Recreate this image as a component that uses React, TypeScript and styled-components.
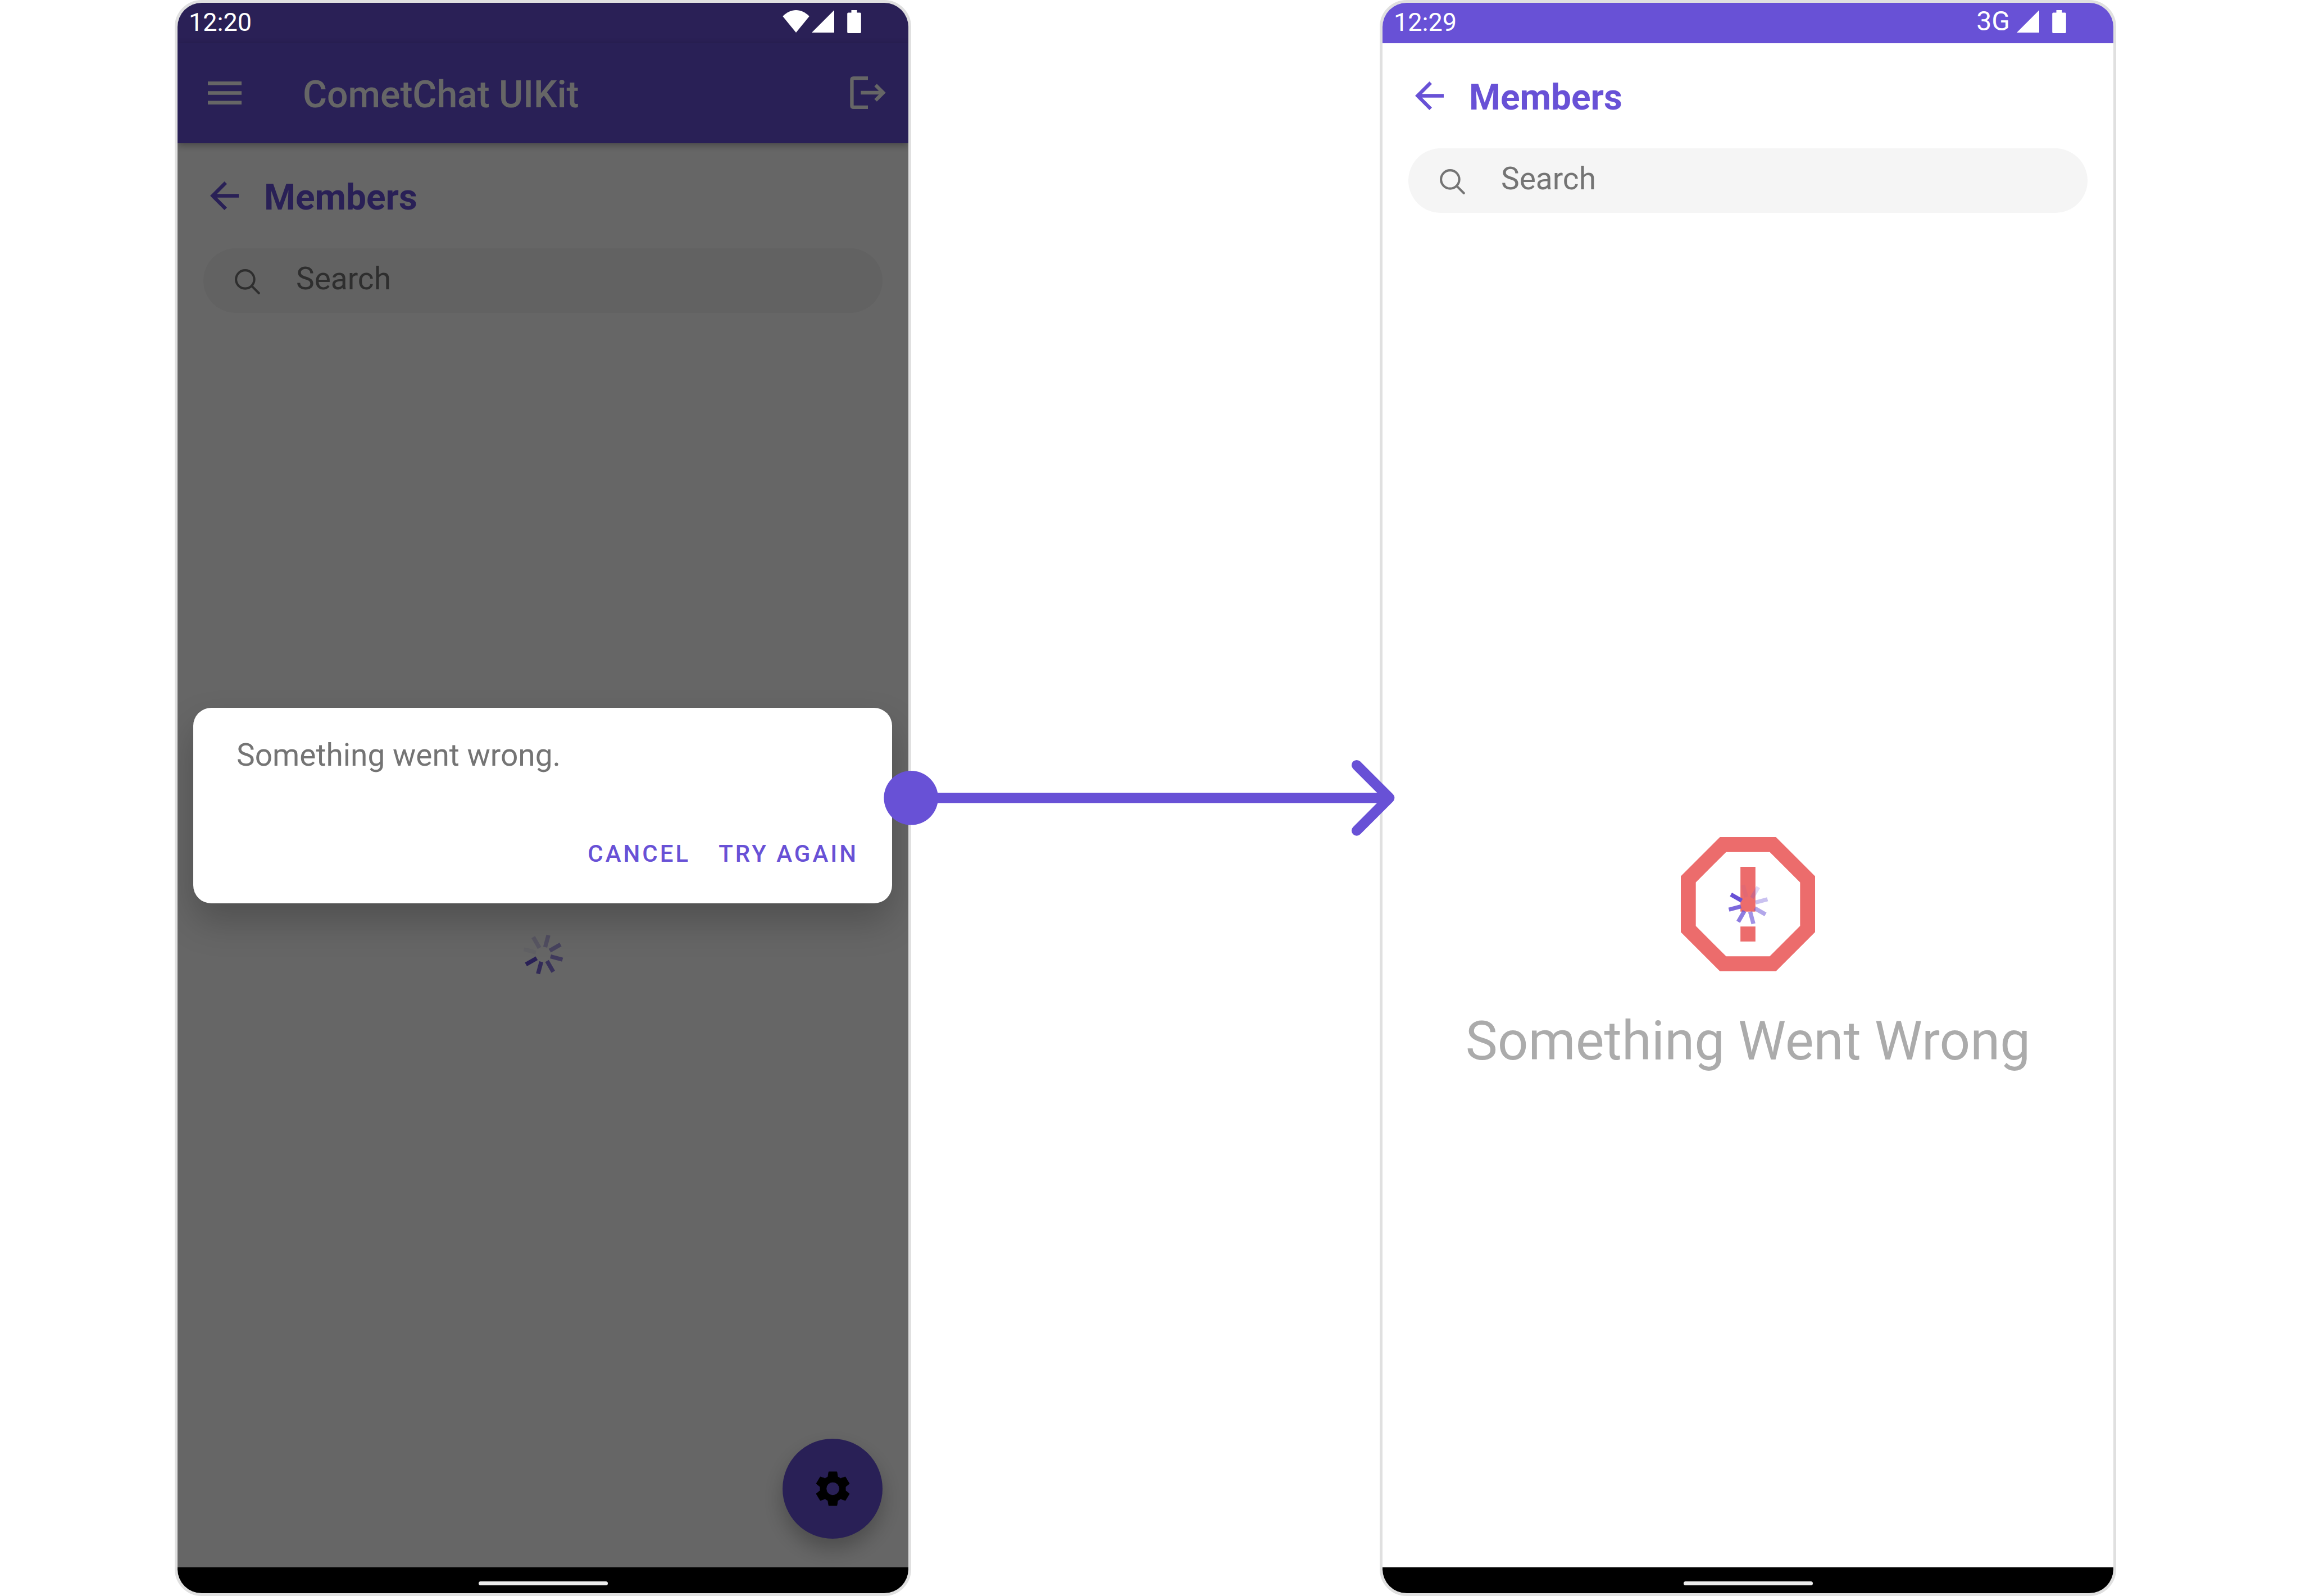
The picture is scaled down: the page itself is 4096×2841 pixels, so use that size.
import React from "react";
import styled, { createGlobalStyle } from "styled-components";

const color = {
  primary: "#6851d6",
  primaryDim: "#2a2056",
  frame: "#e0e0e0",
  muted: "#747474",
  faint: "#ababab",
  field: "#f5f5f5",
  error: "#ec6c6c",
};

const GlobalStyle = createGlobalStyle`
  *, *::before, *::after { box-sizing: border-box; }
  body { margin: 0; background: #fff; font-family: Roboto, "Liberation Sans", sans-serif; }
  button, input { font: inherit; color: inherit; }
  svg { display: block; flex: none; }
`;

const Page = styled.main`
  display: grid;
  grid-template-columns: 311fr 1311fr 834fr 1311fr 329fr;
  min-height: 100vh;
`;

const Phone = styled.section<{ $column: number }>`
  grid-column: ${(p) => p.$column};
  grid-row: 1;
  display: flex;
  flex-direction: column;
  overflow: hidden;
  border: 5px solid ${color.frame};
  border-radius: 48px;
  background: #fff;
`;

const StatusBar = styled.div<{ $dimmed?: boolean }>`
  display: flex;
  align-items: center;
  justify-content: space-between;
  height: 72px;
  padding: 0 84px 6px 20px;
  background: ${(p) => (p.$dimmed ? color.primaryDim : color.primary)};
  color: #fff;
  font-size: 45px;
  line-height: 56px;
`;

const Clock = styled.span`
  padding-top: 4px;
`;

const StatusIcons = styled.div`
  display: flex;
  align-items: center;
`;

const Network = styled.span`
  margin-right: 12px;
  font-size: 48px;
`;

const Battery = styled.svg`
  margin-left: 23px;
`;

const Wifi = styled.svg`
  margin-right: 4px;
`;

const Screen = styled.div`
  position: relative;
  flex: 1;
  display: flex;
  flex-direction: column;
`;

const AppBar = styled.header`
  display: flex;
  align-items: center;
  height: 178px;
  padding: 0 40px 2px 54px;
  background: ${color.primary};
  color: #fff;
  box-shadow: 0 4px 12px rgba(0, 0, 0, 0.3);
`;

const IconButton = styled.button`
  display: flex;
  padding: 0;
  border: 0;
  background: none;
  cursor: pointer;
`;

const AppTitle = styled.h1`
  flex: 1;
  margin: 0 0 0 109px;
  padding-top: 8px;
  font-size: 66px;
  font-weight: 500;
  line-height: 80px;
`;

const ListHeader = styled.div`
  display: flex;
  align-items: center;
  gap: 45px;
  height: 187px;
  padding-left: 58px;
  color: ${color.primary};
`;

const ListTitle = styled.h2`
  margin: 0;
  padding-top: 6px;
  font-size: 64px;
  font-weight: 700;
  line-height: 80px;
`;

const SearchBox = styled.label`
  display: flex;
  align-items: center;
  gap: 64px;
  height: 115px;
  margin: 0 46px 50px;
  padding: 0 56px;
  border-radius: 58px;
  background: ${color.field};
  color: ${color.muted};
`;

const SearchGlyph = styled.svg`
  margin-top: 4px;
`;

const SearchInput = styled.input`
  flex: 1;
  min-width: 0;
  height: 72px;
  margin-bottom: 8px;
  padding: 0;
  border: 0;
  outline: 0;
  background: none;
  font-size: 55px;
  line-height: 72px;
  &::placeholder { color: ${color.muted}; opacity: 1; }
`;

const Content = styled.div`
  flex: 1;
  display: grid;
  grid-template-rows: 1fr auto 1fr;
  justify-items: center;
`;

const Centered = styled.div`
  grid-area: 2 / 1;
  align-self: center;
`;

const ErrorText = styled.p`
  grid-area: 3 / 1;
  margin: 68px 0 0;
  color: ${color.faint};
  font-size: 96px;
  line-height: 112px;
`;

const Fab = styled.button`
  position: absolute;
  right: 46px;
  bottom: 51px;
  display: grid;
  place-items: center;
  width: 178px;
  height: 178px;
  padding: 0;
  border: 0;
  border-radius: 50%;
  background: ${color.primary};
  color: #000;
  box-shadow: 0 18px 36px rgba(0, 0, 0, 0.26);
`;

const Scrim = styled.div`
  position: absolute;
  inset: 0;
  display: flex;
  align-items: center;
  padding: 0 29px 0 28px;
  background: rgba(0, 0, 0, 0.6);
`;

const Dialog = styled.div`
  flex: 1;
  display: flex;
  flex-direction: column;
  justify-content: space-between;
  height: 348px;
  padding: 48px 60px 60px 77px;
  border-radius: 32px;
  background: #fff;
  box-shadow: 0 32px 64px rgba(0, 0, 0, 0.22);
`;

const DialogText = styled.p`
  margin: 0;
  color: ${color.muted};
  font-size: 55px;
  line-height: 72px;
`;

const DialogActions = styled.div`
  display: flex;
  justify-content: flex-end;
  gap: 50px;
`;

const TextButton = styled.button`
  padding: 0;
  border: 0;
  background: none;
  color: ${color.primary};
  font-size: 42px;
  font-weight: 500;
  line-height: 56px;
  letter-spacing: 4px;
  text-transform: uppercase;
  cursor: pointer;
`;

const NavBar = styled.div`
  display: flex;
  justify-content: center;
  height: 46px;
  padding-top: 25px;
  background: #000;
`;

const HomeIndicator = styled.div`
  width: 230px;
  height: 7px;
  border-radius: 4px;
  background: #ebebeb;
`;

const Connector = styled.div`
  grid-column: 3;
  grid-row: 1;
  position: relative;
  z-index: 1;
  display: flex;
  align-items: center;
  margin: 0 -31px 0 -55px;
`;

function SignalIcon() {
  return (
    <svg width="40" height="40" viewBox="0 0 44 44" aria-hidden="true">
      <path d="M44 0V44H0z" fill="#fff" />
    </svg>
  );
}

function BatteryIcon() {
  return (
    <Battery width="25" height="41" viewBox="0 0 27 45" aria-hidden="true">
      <path d="M8 0H19V5H25Q27 5 27 7V43Q27 45 25 45H2Q0 45 0 43V7Q0 5 2 5H8z" fill="#fff" />
    </Battery>
  );
}

function WifiIcon() {
  return (
    <Wifi width="48" height="40" viewBox="0 0 52 44" aria-hidden="true">
      <path d="M0 12C8 4 17 0 26 0S44 4 52 12L26 44z" fill="#fff" />
    </Wifi>
  );
}

function MenuIcon() {
  return (
    <svg width="60" height="41" viewBox="0 0 66 45" aria-hidden="true">
      <path d="M0 3.5H66M0 22.5H66M0 41.5H66" stroke="currentColor" strokeWidth="7" />
    </svg>
  );
}

function LogoutIcon() {
  return (
    <svg width="64" height="58" viewBox="0 0 70 64" fill="none" stroke="currentColor" strokeWidth="7" aria-hidden="true">
      <path d="M35 3.5H7Q3.5 3.5 3.5 7V57Q3.5 60.5 7 60.5H35" />
      <path d="M21 32H64M50 17L65 32L50 47" />
    </svg>
  );
}

function BackIcon() {
  return (
    <svg width="51" height="51" viewBox="0 0 56 56" fill="none" stroke="currentColor" strokeWidth="7" aria-hidden="true">
      <path d="M56 28H7M30.500 2.500L5 28L30.500 53.500" />
    </svg>
  );
}

function SearchIcon() {
  return (
    <SearchGlyph width="45" height="45" viewBox="0 0 49 49" fill="none" stroke="currentColor" strokeWidth="4.500" aria-hidden="true">
      <circle cx="20" cy="20" r="17.700" />
      <path d="M32.500 32.500L46.500 46.500" strokeLinecap="round" />
    </SearchGlyph>
  );
}

function GearIcon() {
  return (
    <svg width="61" height="62" viewBox="341 347 200 206" aria-hidden="true">
      <path
        fill="currentColor"
        stroke="currentColor"
        strokeWidth="3"
        strokeLinejoin="round"
        fillRule="evenodd"
        d="M417 350H465L470 380L487 389L515 380L539 420L516 439V461L539 480L515 520L487 510L470 521L465 550H417L412 521L395 510L367 520L343 480L366 461V439L343 420L367 380L395 389L412 380zM441 411A39 39 0 1 0 441 489A39 39 0 1 0 441 411z"
      />
    </svg>
  );
}

function ErrorIcon() {
  return (
    <svg width="239" height="239" viewBox="137 107 788 788" aria-hidden="true">
      <path
        fill={color.error}
        fillRule="evenodd"
        d="M367 107H695L925 337V665L695 895H367L137 665V337zM403 195L225 373V629L403 807H659L837 629V373L659 195z"
      />
      <path fill={color.error} d="M487 282H575V545H487zM487 632H575V720H487z" />
    </svg>
  );
}

function Spinner({ start }: { start: number }) {
  const strokes = [1, 0.85, 0.75, 0.62, 0.5, 0.35, 0.22, 0.07];
  return (
    <svg width="74" height="74" viewBox="-40 -40 80 80" role="img" aria-label="Loading">
      {strokes.map((opacity, i) => (
        <path
          key={opacity}
          d="M14.500 0H38.500"
          stroke={color.primary}
          strokeWidth="8"
          opacity={opacity}
          transform={`rotate(${start - i * 45})`}
        />
      ))}
    </svg>
  );
}

function MembersList() {
  return (
    <>
      <ListHeader>
        <IconButton aria-label="Back">
          <BackIcon />
        </IconButton>
        <ListTitle>Members</ListTitle>
      </ListHeader>
      <SearchBox>
        <SearchIcon />
        <SearchInput type="text" placeholder="Search" aria-label="Search" />
      </SearchBox>
    </>
  );
}

function Navigation() {
  return (
    <NavBar>
      <HomeIndicator />
    </NavBar>
  );
}

export default function App() {
  return (
    <>
      <GlobalStyle />
      <Page>
        <Phone $column={2}>
          <StatusBar $dimmed>
            <Clock>12:20</Clock>
            <StatusIcons>
              <WifiIcon />
              <SignalIcon />
              <BatteryIcon />
            </StatusIcons>
          </StatusBar>
          <Screen>
            <AppBar>
              <IconButton aria-label="Menu">
                <MenuIcon />
              </IconButton>
              <AppTitle>CometChat UIKit</AppTitle>
              <IconButton aria-label="Log out">
                <LogoutIcon />
              </IconButton>
            </AppBar>
            <MembersList />
            <Content>
              <Centered>
                <Spinner start={150} />
              </Centered>
            </Content>
            <Fab aria-label="Settings">
              <GearIcon />
            </Fab>
            <Scrim>
              <Dialog role="dialog" aria-label="Error">
                <DialogText>Something went wrong.</DialogText>
                <DialogActions>
                  <TextButton>Cancel</TextButton>
                  <TextButton>Try again</TextButton>
                </DialogActions>
              </Dialog>
            </Scrim>
          </Screen>
          <Navigation />
        </Phone>

        <Connector>
          <svg width="100%" viewBox="1721 1485 1010 150" fill="none" stroke={color.primary} strokeWidth="20" aria-hidden="true">
            <circle cx="1781" cy="1560" r="53" fill={color.primary} stroke="none" />
            <path d="M1781 1560H2712" />
            <path d="M2652 1496L2716 1560L2652 1624" strokeLinecap="round" strokeLinejoin="round" />
          </svg>
        </Connector>

        <Phone $column={4}>
          <StatusBar>
            <Clock>12:29</Clock>
            <StatusIcons>
              <Network>3G</Network>
              <SignalIcon />
              <BatteryIcon />
            </StatusIcons>
          </StatusBar>
          <Screen>
            <MembersList />
            <Content>
              <Centered>
                <ErrorIcon />
              </Centered>
              <Centered>
                <Spinner start={210} />
              </Centered>
              <ErrorText>Something Went Wrong</ErrorText>
            </Content>
          </Screen>
          <Navigation />
        </Phone>
      </Page>
    </>
  );
}
